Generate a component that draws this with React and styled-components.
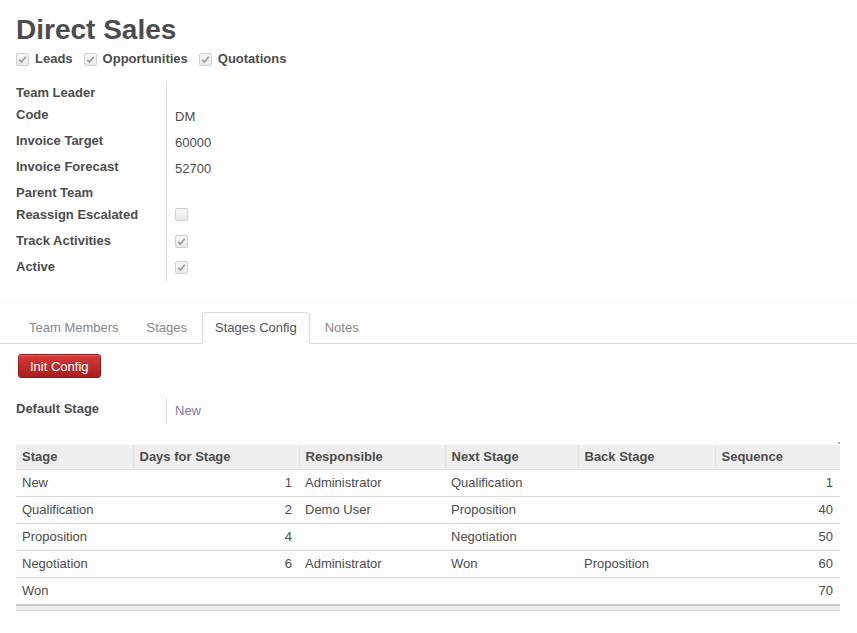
import React from "react";
import styled, { createGlobalStyle } from "styled-components";

const GlobalStyle = createGlobalStyle`
  html, body {
    margin: 0;
    padding: 0;
    background: #ffffff;
  }
  body {
    font-family: "Liberation Sans", Arial, Helvetica, sans-serif;
    font-size: 13px;
    color: #4c4c4c;
  }
`;

// Sheet wrapper
const Sheet = styled.div`
  width: 857px;
  min-height: 633px;
`;

const Header = styled.div`
  padding: 14px 16px 0 16px;
`;

const Title = styled.h1`
  margin: 0;
  font-size: 28px;
  line-height: 32px;
  font-weight: bold;
  color: #4c4c4c;
`;

const OptionRow = styled.div`
  display: flex;
  align-items: center;
  gap: 11px;
  margin-top: 4px;
  height: 18px;
`;

const Option = styled.label`
  display: flex;
  align-items: center;
  gap: 6px;
  font-weight: bold;
  font-size: 13px;
  line-height: 18px;
`;

const Box = styled.span`
  display: inline-flex;
  align-items: center;
  justify-content: center;
  width: 11px;
  height: 11px;
  border: 1px solid #cfcfcf;
  border-radius: 2px;
  background: linear-gradient(#f7f7f7, #e9e9e9);
  flex-shrink: 0;
`;

const Checkbox = ({ checked }) => (
  <Box>
    {checked && (
      <svg width="9" height="9" viewBox="0 0 9 9">
        <path d="M1.2 4.8 L3.4 7 L7.8 1.8" fill="none" stroke="#9a9a9a" strokeWidth="1.7" />
      </svg>
    )}
  </Box>
);

// Form grid
const Form = styled.div`
  display: grid;
  grid-template-columns: 150px 1fr;
  margin: 14px 16px 0 16px;
`;

const Label = styled.div`
  height: ${(p) => (p.$compact ? 22 : 26)}px;
  padding-top: 3px;
  box-sizing: border-box;
  font-weight: bold;
  line-height: 16px;
`;

const Value = styled.div`
  height: ${(p) => (p.$compact ? 22 : 26)}px;
  box-sizing: border-box;
  border-left: 1px solid #dddddd;
  padding: ${(p) => (p.$box ? "4px" : "5px")} 0 0 8px;
  line-height: 16px;
  color: ${(p) => (p.$link ? "#7c7bad" : "#4c4c4c")};
`;

// Notebook
const Notebook = styled.div`
  margin-top: 18px;
  padding-top: 12px;
  background: #fdfdfd;
  min-height: 333px;
`;

const TabList = styled.ul`
  display: flex;
  list-style: none;
  margin: 0;
  padding: 0 0 0 16px;
  border-bottom: 1px solid #dddddd;
`;

const Tab = styled.li`
  margin: 0 2px -1px 0;
  padding: 7px 12px 7px 12px;
  line-height: 16px;
  border: 1px solid ${(p) => (p.$active ? "#dddddd" : "transparent")};
  border-bottom-color: ${(p) => (p.$active ? "#fdfdfd" : "transparent")};
  border-radius: 4px 4px 0 0;
  background: ${(p) => (p.$active ? "#fdfdfd" : "transparent")};
  color: ${(p) => (p.$active ? "#555555" : "#888888")};
`;

const Page = styled.div`
  padding: 10px 17px 0 16px;
`;

const RedButton = styled.button`
  margin-left: 2px;
  height: 24px;
  padding: 0 11px;
  font-family: inherit;
  font-size: 13px;
  color: #ffffff;
  border: 1px solid #8e1b1b;
  border-radius: 3px;
  background: linear-gradient(#d83c3c, #a71d1d);
  box-shadow: inset 0 1px 0 rgba(255, 255, 255, 0.2);
  text-shadow: 0 -1px 0 rgba(0, 0, 0, 0.2);
`;

const SubForm = styled(Form)`
  margin: 20px 0 0 0;
`;

const TableWrap = styled.div`
  position: relative;
  margin-top: 21px;

  &::after {
    content: "";
    position: absolute;
    right: 0;
    top: -3px;
    width: 2px;
    height: 2px;
    background: #b5b5b5;
  }
`;

const Table = styled.table`
  width: 100%;
  border-collapse: collapse;
  table-layout: fixed;
`;

const Th = styled.th`
  height: 24px;
  padding: 0 6px;
  text-align: left;
  font-weight: bold;
  background: #eeeeee;
  border-left: 1px solid #e2e2e2;
  border-bottom: 1px solid #dddddd;
  line-height: 16px;

  &:first-child {
    border-left: none;
  }
`;

const Td = styled.td`
  height: 26px;
  padding: 0 7px 0 6px;
  text-align: ${(p) => (p.$num ? "right" : "left")};
  border-bottom: 1px solid #dddddd;
  line-height: 16px;
  vertical-align: middle;
`;

const Foot = styled.td`
  height: 4px;
  padding: 0;
  background: #ececec;
  border-top: 2px solid #cccccc;
  border-bottom: 1px solid #d4d4d4;
`;

const fields = [
  { label: "Team Leader", compact: true },
  { label: "Code", value: "DM" },
  { label: "Invoice Target", value: "60000" },
  { label: "Invoice Forecast", value: "52700" },
  { label: "Parent Team", compact: true },
  { label: "Reassign Escalated", box: true, checked: false },
  { label: "Track Activities", box: true, checked: true },
  { label: "Active", box: true, checked: true },
];

const stages = [
  ["New", "1", "Administrator", "Qualification", "", "1"],
  ["Qualification", "2", "Demo User", "Proposition", "", "40"],
  ["Proposition", "4", "", "Negotiation", "", "50"],
  ["Negotiation", "6", "Administrator", "Won", "Proposition", "60"],
  ["Won", "", "", "", "", "70"],
];

const widths = [117, 166, 146, 133, 137, 125];

const App = () => (
  <Sheet>
    <GlobalStyle />
    <Header>
      <Title>Direct Sales</Title>
      <OptionRow>
        <Option><Checkbox checked />Leads</Option>
        <Option><Checkbox checked />Opportunities</Option>
        <Option><Checkbox checked />Quotations</Option>
      </OptionRow>
    </Header>

    <Form>
      {fields.map((f) => (
        <React.Fragment key={f.label}>
          <Label $compact={f.compact}>{f.label}</Label>
          <Value $compact={f.compact} $box={f.box}>
            {f.box ? <Checkbox checked={f.checked} /> : f.value}
          </Value>
        </React.Fragment>
      ))}
    </Form>

    <Notebook>
      <TabList>
        <Tab>Team Members</Tab>
        <Tab>Stages</Tab>
        <Tab $active>Stages Config</Tab>
        <Tab>Notes</Tab>
      </TabList>
      <Page>
        <RedButton>Init Config</RedButton>
        <SubForm>
          <Label>Default Stage</Label>
          <Value $link>New</Value>
        </SubForm>
        <TableWrap>
          <Table>
            <colgroup>
              {widths.map((w, i) => (
                <col key={i} style={{ width: w }} />
              ))}
            </colgroup>
            <thead>
              <tr>
                <Th>Stage</Th>
                <Th>Days for Stage</Th>
                <Th>Responsible</Th>
                <Th>Next Stage</Th>
                <Th>Back Stage</Th>
                <Th>Sequence</Th>
              </tr>
            </thead>
            <tbody>
              {stages.map((r) => (
                <tr key={r[0]}>
                  <Td>{r[0]}</Td>
                  <Td $num>{r[1]}</Td>
                  <Td>{r[2]}</Td>
                  <Td>{r[3]}</Td>
                  <Td>{r[4]}</Td>
                  <Td $num>{r[5]}</Td>
                </tr>
              ))}
            </tbody>
            <tfoot>
              <tr>
                <Foot colSpan={6} />
              </tr>
            </tfoot>
          </Table>
        </TableWrap>
      </Page>
    </Notebook>
  </Sheet>
);

export default App;
